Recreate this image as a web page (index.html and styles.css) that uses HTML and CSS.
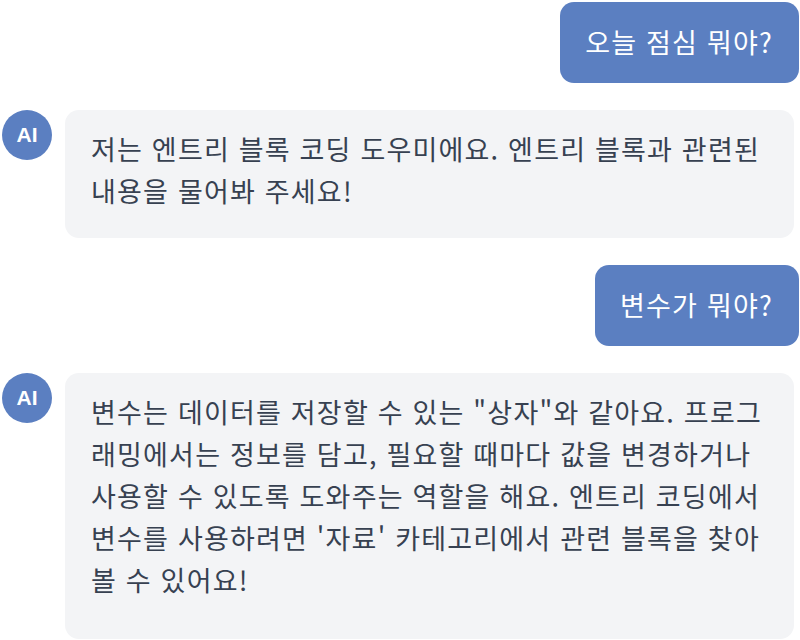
FILE: index.html
```html
<!DOCTYPE html>
<html lang="ko">
<head>
    <meta charset="UTF-8">
    <meta name="viewport" content="width=device-width, initial-scale=1">
    <title>엔트리 코딩 도우미</title>
    <link rel="stylesheet" href="styles.css">
</head>
<body>

<div class="chat">
    <div class="row row-user">
        <div class="bubble bubble-user">오늘 점심 뭐야?</div>
    </div>

    <div class="row row-ai">
        <div class="avatar">AI</div>
        <div class="bubble bubble-ai">저는 엔트리 블록 코딩 도우미에요. 엔트리 블록과 관련된 내용을 물어봐 주세요!</div>
    </div>

    <div class="row row-user">
        <div class="bubble bubble-user">변수가 뭐야?</div>
    </div>

    <div class="row row-ai">
        <div class="avatar">AI</div>
        <div class="bubble bubble-ai bubble-long">변수는 데이터를 저장할 수 있는 "상자"와 같아요. 프로그래밍에서는 정보를 담고, 필요할 때마다 값을 변경하거나 사용할 수 있도록 도와주는 역할을 해요. 엔트리 코딩에서 변수를 사용하려면 '자료' 카테고리에서 관련 블록을 찾아볼 수 있어요!</div>
    </div>
</div>

</body>
</html>
```

FILE: styles.css
```css
body {
    margin: 0;
    background-color: #fff;
    font-family: "Noto Sans CJK KR", "Noto Sans", sans-serif;
}

.chat {
    display: flex;
    flex-direction: column;
    gap: 27px;
    padding: 2px 1px 0 2px;
}

.row {
    display: flex;
    align-items: flex-start;
}

.row-user {
    justify-content: flex-end;
}

.row-ai {
    gap: 13px;
}

/* 동그란 AI 아이콘 */
.avatar {
    width: 50px;
    height: 50px;
    flex-shrink: 0;
    border-radius: 50%;
    background-color: #5b7fc1;
    color: #fff;
    font-family: "Liberation Sans", sans-serif;
    font-size: 21px;
    font-weight: bold;
    display: flex;
    align-items: center;
    justify-content: center;
}

.bubble {
    font-size: 27px;
    letter-spacing: 1.2px;
    line-height: 42px;
    border-radius: 14px;
    box-sizing: border-box;
}

.bubble-user {
    background-color: #5b7fc1;
    color: #fff;
    padding: 19px 26px 20px 25px;
}

.bubble-ai {
    width: 729px;
    background-color: #f3f4f6;
    color: #374151;
    padding: 18px 26px 26px;
}

.bubble-long {
    padding-bottom: 38px;
}
```
